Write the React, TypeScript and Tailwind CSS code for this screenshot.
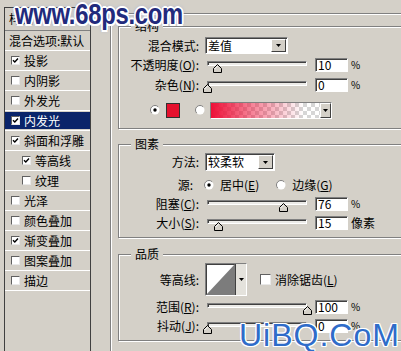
import React from "react";

const sunken =
  "border border-t-[#808080] border-l-[#808080] border-r-white border-b-white shadow-[inset_1px_1px_0_#404040]";

function Tri() {
  return (
    <svg width="5" height="3" viewBox="0 0 5 3">
      <path d="M0 0H5L2.5 3Z" fill="#000" />
    </svg>
  );
}

function DropBtn({ w }: { w: "w-[15px]" | "w-[11px]" }) {
  return (
    <div
      className={`${w} h-full shrink-0 flex items-center justify-center bg-[#d4d0c8] border border-t-white border-l-white border-r-[#404040] border-b-[#404040]`}
    >
      <Tri />
    </div>
  );
}

function Box({ checked, big }: { checked: boolean; big?: boolean }) {
  return (
    <span
      className={`${big ? "w-[11px] h-[11px]" : "w-[9px] h-[9px]"} shrink-0 flex items-center justify-center bg-white border border-t-[#606060] border-l-[#606060] border-r-[#e8e8e8] border-b-[#e8e8e8]`}
    >
      {checked && (
        <svg width="7" height="7" viewBox="0 0 7 7">
          <path d="M1 3.2 L2.8 5 L6 1.5" stroke="#000" strokeWidth="1.4" fill="none" />
        </svg>
      )}
    </span>
  );
}

function Radio({ checked }: { checked: boolean }) {
  return (
    <svg width="10" height="10" viewBox="0 0 10 10" className="shrink-0">
      <circle cx="5" cy="5" r="4.5" fill="#fff" />
      <path d="M1.8 8.2 A4.5 4.5 0 0 1 8.2 1.8" stroke="#808080" fill="none" />
      {checked && <circle cx="5" cy="5" r="1.7" fill="#000" />}
    </svg>
  );
}

function Slider({ value }: { value: number }) {
  return (
    <div className="relative ml-[8px] w-[100px] h-[14px] shrink-0">
      <div className="mt-[3px] h-[5px] border border-t-[#808080] border-l-[#808080] border-r-white border-b-white bg-[#ecebe8] shadow-[inset_1px_1px_0_#404040]" />
      <svg
        className="absolute top-[6px]"
        style={{ left: value - 4 }}
        width="9"
        height="9"
        viewBox="0 0 9 9"
      >
        <path d="M4.5 0.5 L8.5 4.5 V8.5 H0.5 V4.5 Z" fill="#d4d0c8" stroke="#000" strokeWidth="1" />
        <path d="M1.5 5 L4.5 2" stroke="#fff" />
      </svg>
    </div>
  );
}

function Field({ v }: { v: string }) {
  return (
    <div className={`ml-[8px] w-[33px] h-[14px] shrink-0 bg-white ${sunken} pl-[2px] flex items-center leading-[12px]`}>
      {v}
    </div>
  );
}

function Label({ children, extra }: { children: React.ReactNode; extra?: string }) {
  return <div className={`w-[80px] shrink-0 text-right whitespace-nowrap ${extra ?? ""}`}>{children}</div>;
}

function U({ c }: { c: string }) {
  return (
    <>
      (<span className="underline">{c}</span>)
    </>
  );
}

function SliderRow({
  label,
  value,
  text,
  unit,
  h,
}: {
  label: React.ReactNode;
  value: number;
  text: string;
  unit: string;
  h: string;
}) {
  return (
    <div className={`flex items-center ${h}`}>
      <Label>{label}</Label>
      <Slider value={value} />
      <Field v={text} />
      <span className={`ml-[3px] ${unit === "%" ? "text-[10px]" : ""}`}>{unit}</span>
    </div>
  );
}

function Group({
  title,
  h,
  mt,
  children,
}: {
  title: string;
  h: string;
  mt: string;
  children: React.ReactNode;
}) {
  return (
    <div
      className={`relative ${h} ${mt} w-[300px] shrink-0 border border-[#808080] shadow-[inset_1px_1px_0_#fff,1px_1px_0_#fff] flex flex-col`}
    >
      <span className="absolute -top-[8px] left-[12px] px-[4px] bg-[#d4d0c8] leading-[14px]">{title}</span>
      {children}
    </div>
  );
}

const items = [
  { t: "投影", c: true },
  { t: "内阴影", c: false },
  { t: "外发光", c: false },
  { t: "内发光", c: true, sel: true },
  { t: "斜面和浮雕", c: true },
  { t: "等高线", c: true, ind: true },
  { t: "纹理", c: false, ind: true },
  { t: "光泽", c: false },
  { t: "颜色叠加", c: false },
  { t: "渐变叠加", c: true },
  { t: "图案叠加", c: false },
  { t: "描边", c: false },
];

function LeftList() {
  return (
    <div className="ml-[4px] mt-[7px] w-[87px] h-[360px] shrink-0 border border-[#404040] flex flex-col">
      <div className="h-[23px] shrink-0 border-b border-[#808080] pl-[4px] flex items-center">样式</div>
      <div className="h-[20px] shrink-0 border-b border-white pl-[4px] flex items-center whitespace-nowrap">
        混合选项:默认
      </div>
      {items.map((it) =>
        it.sel ? (
          <div key={it.t} className="h-[20px] shrink-0 border-b border-white flex flex-col">
            <div className="mt-[1px] h-[17px] bg-[#0a246a] text-white pl-[6px] flex items-center gap-[4px]">
              <Box checked={it.c} />
              <span>{it.t}</span>
            </div>
          </div>
        ) : (
          <div
            key={it.t}
            className={`h-[20px] shrink-0 border-b border-white flex items-center gap-[4px] ${it.ind ? "pl-[17px]" : "pl-[6px]"}`}
          >
            <Box checked={it.c} />
            <span>{it.t}</span>
          </div>
        )
      )}
    </div>
  );
}

function RightPanel() {
  return (
    <div className="ml-[19px] mt-[13px] w-[320px] h-[360px] shrink-0 border border-[#808080] shadow-[inset_1px_1px_0_#fff] pl-[7px] pt-[12px] flex flex-col">
      <Group title="结构" h="h-[103px]" mt="mt-0">
        <div className="mt-[10px] h-[17px] flex items-center">
          <Label>混合模式:</Label>
          <div className={`ml-[6px] w-[83px] h-[17px] shrink-0 flex bg-white ${sunken} p-[1px]`}>
            <span className="flex-1 pl-[1px] leading-[13px]">差值</span>
            <DropBtn w="w-[15px]" />
          </div>
        </div>
        <div className="mt-[1px]">
          <SliderRow h="h-[20px]" label={<>不透明度<U c="O" />:</>} value={10} text="10" unit="%" />
        </div>
        <SliderRow h="h-[20px]" label={<>杂色<U c="N" />:</>} value={0} text="0" unit="%" />
        <div className="mt-[5px] h-[20px] flex items-center">
          <span className="ml-[31px] flex">
            <Radio checked />
          </span>
          <div className="ml-[6px] w-[14px] h-[15px] shrink-0 border border-[#303030] bg-[#e5102d]" />
          <span className="ml-[15px] flex">
            <Radio checked={false} />
          </span>
          <div className={`ml-[5px] w-[122px] h-[17px] shrink-0 flex ${sunken}`}>
            <div className="flex-1 bg-[image:repeating-conic-gradient(#d6d6d6_0_25%,#ffffff_0_50%)] bg-[length:8px_8px]">
              <div className="h-full bg-[image:linear-gradient(to_right,#ee1038,rgba(238,16,56,0.55)_35%,rgba(238,16,56,0)_85%)]" />
            </div>
            <DropBtn w="w-[11px]" />
          </div>
        </div>
      </Group>

      <Group title="图素" h="h-[94px]" mt="mt-[15px]">
        <div className="mt-[8px] h-[18px] flex items-center">
          <Label>方法:</Label>
          <div className={`ml-[6px] w-[70px] h-[18px] shrink-0 flex bg-white ${sunken} p-[1px]`}>
            <span className="flex-1 pl-[1px] leading-[14px]">较柔软</span>
            <DropBtn w="w-[15px]" />
          </div>
        </div>
        <div className="mt-[5px] h-[18px] flex items-center">
          <Label extra="pr-[6px]">源:</Label>
          <span className="ml-[5px] flex">
            <Radio checked />
          </span>
          <span className="ml-[6px]">
            居中<U c="E" />
          </span>
          <span className="ml-[17px] flex">
            <Radio checked={false} />
          </span>
          <span className="ml-[6px]">
            边缘<U c="G" />
          </span>
        </div>
        <SliderRow h="h-[19px]" label={<>阻塞<U c="C" />:</>} value={76} text="76" unit="%" />
        <SliderRow h="h-[19px]" label={<>大小<U c="S" />:</>} value={11} text="15" unit="像素" />
      </Group>

      <Group title="品质" h="h-[87px]" mt="mt-[16px]">
        <div className="mt-[8px] h-[33px] flex items-center">
          <Label>等高线:</Label>
          <div className={`ml-[6px] w-[42px] h-[33px] shrink-0 flex bg-white ${sunken}`}>
            <svg width="29" height="31" viewBox="0 0 29 31" className="shrink-0">
              <polygon points="0,31 29,0 29,31" fill="#7c7c7c" />
            </svg>
            <div className="flex-1 bg-[#e4e2dc] border-l border-[#404040] flex items-center justify-center">
              <Tri />
            </div>
          </div>
          <span className="ml-[13px] flex">
            <Box checked={false} big />
          </span>
          <span className="ml-[4px]">
            消除锯齿<U c="L" />
          </span>
        </div>
        <div className="mt-[1px]">
          <SliderRow h="h-[19px]" label={<>范围<U c="R" />:</>} value={100} text="100" unit="%" />
        </div>
        <SliderRow h="h-[20px]" label={<>抖动<U c="J" />:</>} value={0} text="0" unit="%" />
      </Group>
    </div>
  );
}

export default function App() {
  return (
    <div className="relative w-[401px] h-[351px] overflow-hidden bg-[#d4d0c8] text-[12px] leading-[14px] text-black font-['Noto_Sans_CJK_SC',sans-serif] flex items-start">
      <LeftList />
      <RightPanel />
      <span className="absolute left-[15px] top-0 origin-left scale-x-[0.82] whitespace-nowrap font-['Liberation_Sans',sans-serif] font-bold text-[29px] leading-[29px] tracking-[-0.3px] text-[#222a7c] [text-shadow:-2px_0_0_#fff,2px_0_0_#fff,0_-2px_0_#fff,0_2px_0_#fff,-1.5px_-1.5px_0_#fff,1.5px_-1.5px_0_#fff,-1.5px_1.5px_0_#fff,1.5px_1.5px_0_#fff,0_0_5px_#7d93d8]">
        www.68ps.com
      </span>
      <span className="absolute left-[239px] top-[319px] whitespace-nowrap font-['Liberation_Sans',sans-serif] text-[32px] leading-[32px] tracking-[1px] text-[#2f6cc9] [text-shadow:-1px_0_0_#fff,1px_0_0_#fff,0_-1px_0_#fff,0_1px_0_#fff,-1px_-1px_0_#fff,1px_-1px_0_#fff,-1px_1px_0_#fff,1px_1px_0_#fff]">
        UiBQ.CoM
      </span>
    </div>
  );
}
